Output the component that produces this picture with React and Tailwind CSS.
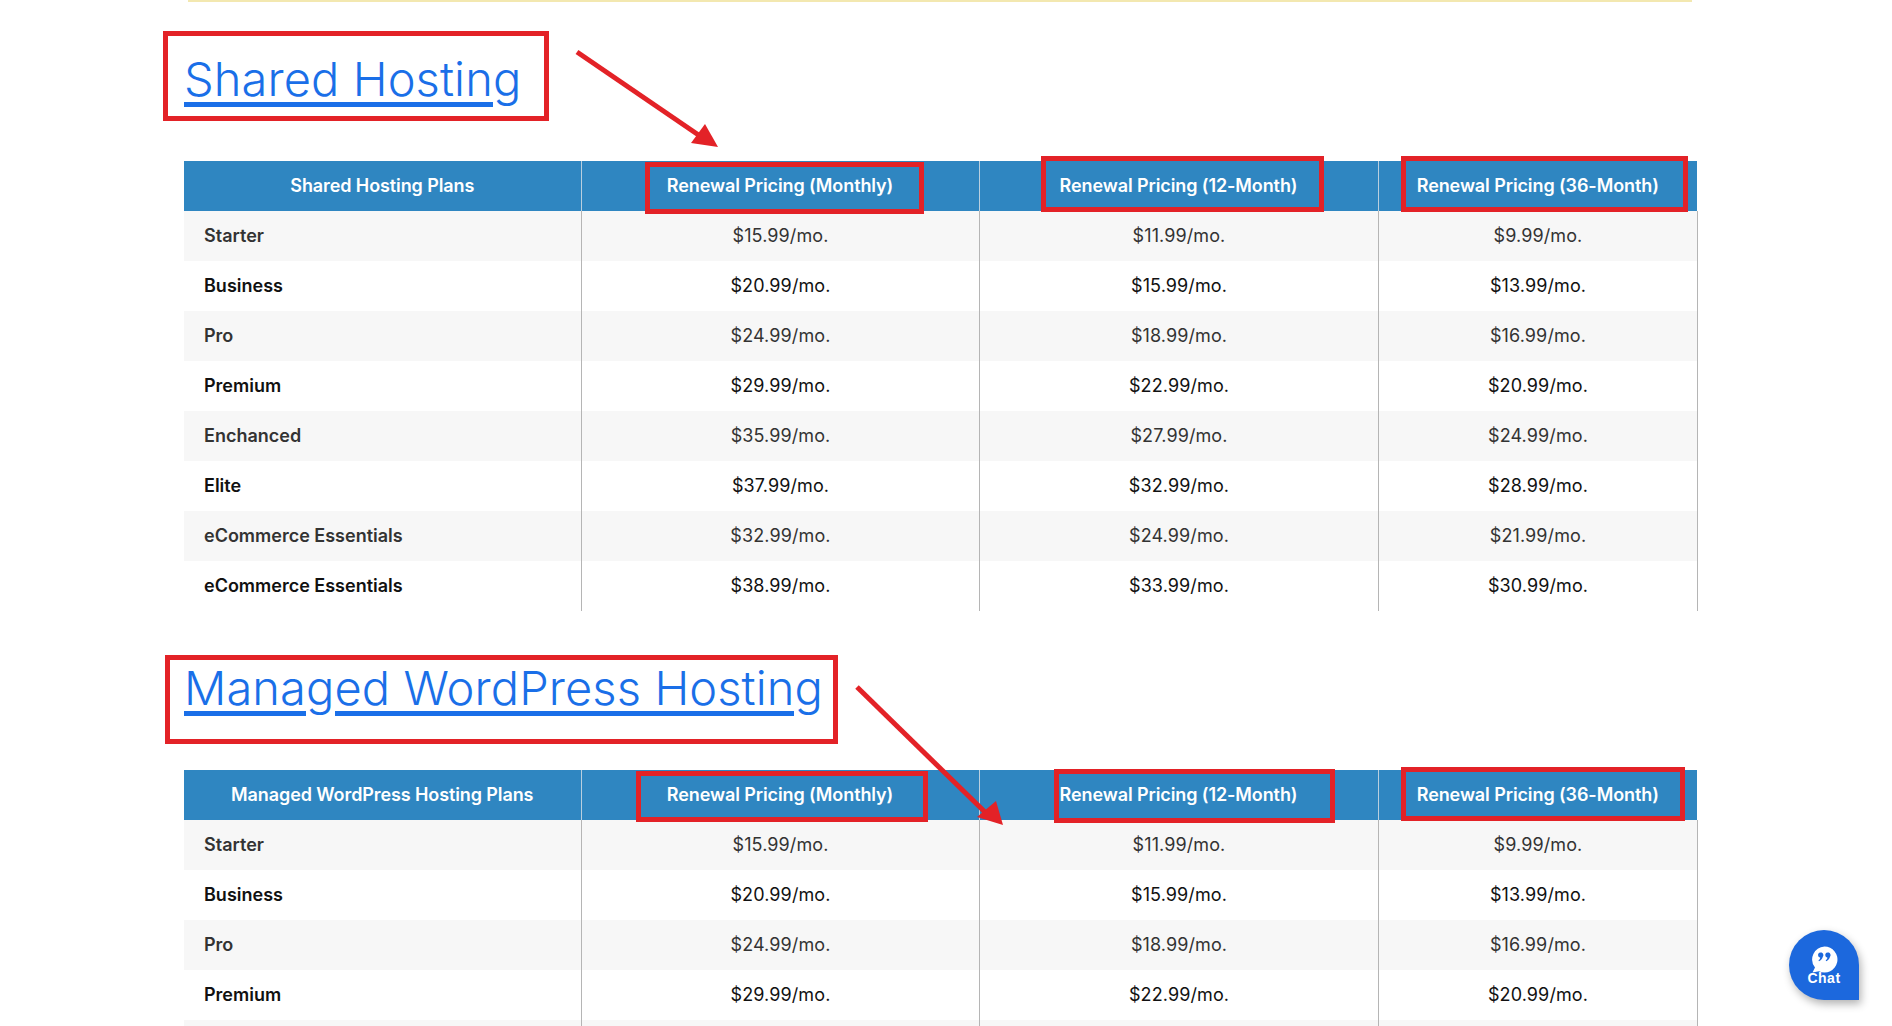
import React from "react";

const font = { fontFamily: '"Inter", "Liberation Sans", sans-serif' };

const shared = [
  ["Starter", "$15.99/mo.", "$11.99/mo.", "$9.99/mo."],
  ["Business", "$20.99/mo.", "$15.99/mo.", "$13.99/mo."],
  ["Pro", "$24.99/mo.", "$18.99/mo.", "$16.99/mo."],
  ["Premium", "$29.99/mo.", "$22.99/mo.", "$20.99/mo."],
  ["Enchanced", "$35.99/mo.", "$27.99/mo.", "$24.99/mo."],
  ["Elite", "$37.99/mo.", "$32.99/mo.", "$28.99/mo."],
  ["eCommerce Essentials", "$32.99/mo.", "$24.99/mo.", "$21.99/mo."],
  ["eCommerce Essentials", "$38.99/mo.", "$33.99/mo.", "$30.99/mo."],
];

const managed = [...shared.slice(0, 4), ["", "", "", ""]];

function Box({ className }) {
  return <div className={"absolute border-[5px] border-[#e32227] " + className} />;
}

function PricingTable({ title, rows }) {
  return (
    <table className="w-[1513px] table-fixed border-collapse text-[18px]">
      <colgroup>
        <col className="w-[397px]" />
        <col className="w-[398px]" />
        <col className="w-[399px]" />
        <col className="w-[319px]" />
      </colgroup>
      <thead>
        <tr className="h-[50px] bg-[#2f86c1] text-white">
          {[title, "Renewal Pricing (Monthly)", "Renewal Pricing (12-Month)", "Renewal Pricing (36-Month)"].map((h, i) => (
            <th key={i} className={"p-0 pb-[1px] text-center text-[18px] font-semibold tracking-[-0.1px] border-[#b9cfdf] " + (i > 0 ? "border-l" : "")}>
              {h}
            </th>
          ))}
        </tr>
      </thead>
      <tbody>
        {rows.map((r, i) => (
          <tr key={i} className={"h-[50px] " + (i % 2 === 0 ? "bg-[#f7f7f7] text-[#333333]" : "bg-white text-[#111111]")}>
            <td className="p-0 pb-[1px] pl-5 font-semibold tracking-[0px]">{r[0]}</td>
            {r.slice(1).map((c, j) => (
              <td key={j} className={"p-0 pb-[1px] pl-[1px] text-center tracking-[0.1px] border-l border-[#b5b5b5] " + (j === 2 ? "border-r" : "")}>
                {c}
              </td>
            ))}
          </tr>
        ))}
      </tbody>
    </table>
  );
}

function Heading({ children, className }) {
  return (
    <h2 className={"text-[47px] leading-[56px] font-light tracking-[0.1px] text-[#1a6fe8] underline decoration-[5px] underline-offset-[6px] " + className}>
      <a href="#">{children}</a>
    </h2>
  );
}

export default function App() {
  return (
    <div className="relative h-[1026px] w-full overflow-hidden bg-white" style={font}>
      <div className="ml-[188px] h-[2px] w-[1504px] bg-[#f3e8b0]" />
      <div className="ml-[184px] w-[1513px] pt-[49px]">
        <Heading className="h-[110px]">Shared Hosting</Heading>
        <PricingTable title="Shared Hosting Plans" rows={shared} />
        <Heading className="mt-[49px] h-[110px]">Managed WordPress Hosting</Heading>
        <PricingTable title="Managed WordPress Hosting Plans" rows={managed} />
      </div>

      <Box className="left-[163px] top-[31px] h-[90px] w-[386px]" />
      <Box className="left-[645px] top-[162px] h-[52px] w-[279px]" />
      <Box className="left-[1041px] top-[156px] h-[56px] w-[283px]" />
      <Box className="left-[1401px] top-[156px] h-[56px] w-[287px]" />
      <Box className="left-[165px] top-[655px] h-[89px] w-[673px]" />
      <Box className="left-[636px] top-[771px] h-[51px] w-[292px]" />
      <Box className="left-[1054px] top-[769px] h-[54px] w-[281px]" />
      <Box className="left-[1401px] top-[767px] h-[54px] w-[284px]" />

      <svg className="absolute left-0 top-0 pointer-events-none" width="1892" height="1026">
        <path d="M577 52 L700 136" stroke="#e32227" strokeWidth="5" fill="none" />
        <path d="M718 147 L691 143 L705 124 Z" fill="#e32227" />
        <path d="M857 687 L988 815" stroke="#e32227" strokeWidth="5" fill="none" />
        <path d="M1003 825 L977 817 L996 801 Z" fill="#e32227" />
      </svg>

      <div className="absolute left-[1789px] top-[930px] flex h-[70px] w-[70px] flex-col items-center justify-center rounded-tl-[35px] rounded-tr-[35px] rounded-bl-[35px] bg-[#1c68dd] pt-[3px] text-white shadow-[2px_4px_8px_rgba(0,0,0,0.3)]">
        <svg width="28" height="27" viewBox="0 0 28 27" className="-mt-[2px]">
          <path d="M14.500 0.500 a13 13 0 1 1 -5.500 24.800 L2.500 26.500 L5 21.500 A13 13 0 0 1 14.500 0.500 Z" fill="white" />
          <path d="M8 9 a2.700 2.700 0 1 1 4.800 1.800 c-0.500 2.200 -2 3.700 -3.800 4.400 l-0.500 -1 c1 -0.600 1.600 -1.400 1.800 -2.500 a2.700 2.700 0 0 1 -2.300 -2.700 Z M15.200 9 a2.700 2.700 0 1 1 4.800 1.800 c-0.500 2.200 -2 3.700 -3.800 4.400 l-0.500 -1 c1 -0.600 1.600 -1.400 1.800 -2.500 a2.700 2.700 0 0 1 -2.300 -2.700 Z" fill="#1c68dd" />
        </svg>
        <span className="-mt-[2px] text-[14px] font-bold leading-[14px] tracking-[0.5px]" style={{ fontFamily: '"Liberation Sans", sans-serif' }}>Chat</span>
      </div>
    </div>
  );
}
